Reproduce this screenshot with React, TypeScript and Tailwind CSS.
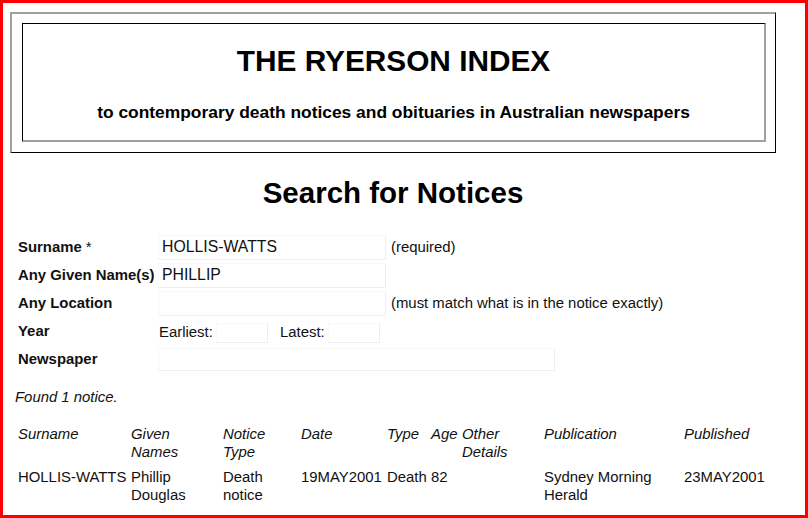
import React from 'react'

const font = "font-['Liberation_Sans',Arial,sans-serif]"

// faint input box the way the old page renders them
const field = 'border border-[#f8f8f8] border-r-[#eeeeee] border-b-[#eeeeee] bg-white px-[3px] text-[15.8px] text-[#111] outline-none'

const cols = 'grid grid-cols-[113px_92px_78px_86px_44px_31px_82px_140px_110px]'

export default function App() {
  return (
    <div className={`w-[808px] h-[518px] bg-white border-[3px] border-[#f00] text-[#111] ${font}`}>
      <div className="ml-[7px] w-[766px]">
        {/* Masthead */}
        <div className="mt-[9px] h-[141px] border-t-2 border-l-2 border-[#a0a0a0] border-r border-b border-r-black border-b-black pt-[9px] pl-[10px] pr-[9px] pb-[10px]">
          <div className="h-full border-t border-l border-black border-r-2 border-b-2 border-r-[#a0a0a0] border-b-[#a0a0a0] flex flex-col items-center">
            <h1 className="mt-[20px] text-[29.8px] leading-[34px] font-bold text-black">THE RYERSON INDEX</h1>
            <p className="mt-[24px] text-[17.4px] leading-[20px] font-bold text-black">
              to contemporary death notices and obituaries in Australian newspapers
            </p>
          </div>
        </div>

        <h2 className="mt-[23px] text-center text-[29.5px] leading-[34px] font-bold text-black">Search for Notices</h2>

        {/* Search form */}
        <div className="mt-[23px] pl-[8px] text-[14.9px] leading-[17px]">
          <div className="flex items-center h-[28px]">
            <span className="w-[140px] font-bold">Surname <span className="font-normal">*</span></span>
            <input className={`${field} w-[228px] h-[25px]`} defaultValue="HOLLIS-WATTS" />
            <span className="ml-[5px]">(required)</span>
          </div>
          <div className="flex items-center h-[28px]">
            <span className="w-[140px] font-bold">Any Given Name(s)</span>
            <input className={`${field} w-[228px] h-[25px]`} defaultValue="PHILLIP" />
          </div>
          <div className="flex items-center h-[28px]">
            <span className="w-[140px] font-bold">Any Location</span>
            <input className={`${field} w-[228px] h-[25px]`} defaultValue="" />
            <span className="ml-[5px]">(must match what is in the notice exactly)</span>
          </div>
          <div className="flex items-start h-[28px] pt-[6px]">
            <span className="w-[140px] font-bold">Year</span>
            <span className="ml-[1px] w-[57px] mt-[1px]">Earliest:</span>
            <input className={`${field} w-[52px] h-[20px]`} defaultValue="" />
            <span className="ml-[12px] w-[48px] mt-[1px]">Latest:</span>
            <input className={`${field} w-[52px] h-[20px]`} defaultValue="" />
          </div>
          <div className="flex items-center h-[28px]">
            <span className="w-[140px] font-bold">Newspaper</span>
            <div className={`${field} w-[397px] h-[23px]`} />
          </div>
        </div>

        <p className="mt-[15px] ml-[5px] italic text-[14.9px] leading-[18px]">Found 1 notice.</p>

        {/* Results */}
        <div className="mt-[19px] ml-[8px] text-[14.9px] leading-[18px]">
          <div className={`${cols} italic`}>
            <span>Surname</span>
            <span>Given<br />Names</span>
            <span>Notice<br />Type</span>
            <span>Date</span>
            <span>Type</span>
            <span>Age</span>
            <span>Other<br />Details</span>
            <span>Publication</span>
            <span>Published</span>
          </div>
          <div className={`${cols} mt-[7px]`}>
            <span>HOLLIS-WATTS</span>
            <span>Phillip<br />Douglas</span>
            <span>Death<br />notice</span>
            <span>19MAY2001</span>
            <span>Death</span>
            <span>82</span>
            <span></span>
            <span>Sydney Morning<br />Herald</span>
            <span>23MAY2001</span>
          </div>
        </div>
      </div>
    </div>
  )
}
